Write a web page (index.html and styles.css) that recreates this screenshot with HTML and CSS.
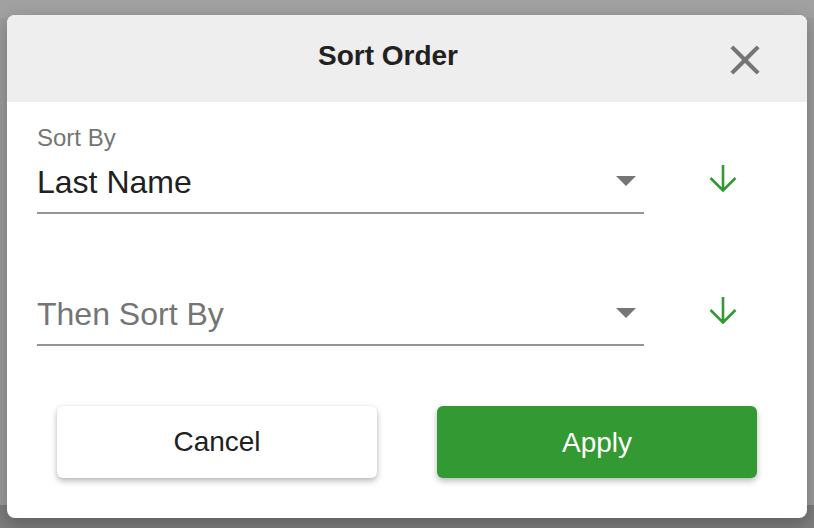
FILE: index.html
```html
<!DOCTYPE html>
<html>
<head>
<meta charset="utf-8">
<link rel="stylesheet" href="styles.css">
</head>
<body>
<div class="backdrop">
  <div class="dialog">
    <div class="dialog-header">
      <h1 class="dialog-title">Sort Order</h1>
      <button class="close-btn" aria-label="Close">
        <svg viewBox="0 0 24 24" width="50" height="50"><path fill="#757575" d="M19 6.41L17.59 5 12 10.59 6.41 5 5 6.41 10.59 12 5 17.59 6.41 19 12 13.41 17.59 19 19 17.59 13.41 12z"/></svg>
      </button>
    </div>
    <div class="dialog-body">
      <div class="sort-row">
        <div class="field">
          <div class="field-label">Sort By</div>
          <div class="field-value">
            <span class="value-text">Last Name</span>
            <span class="caret"></span>
          </div>
        </div>
        <div class="dir">
          <svg viewBox="0 0 28 28" width="28" height="28"><path d="M14 1V26.5M1.5 14L14 26.5L26.5 14" fill="none" stroke="#339933" stroke-width="2.6"/></svg>
        </div>
      </div>
      <div class="sort-row">
        <div class="field">
          <div class="field-label"></div>
          <div class="field-value">
            <span class="value-text placeholder">Then Sort By</span>
            <span class="caret"></span>
          </div>
        </div>
        <div class="dir">
          <svg viewBox="0 0 28 28" width="28" height="28"><path d="M14 1V26.5M1.5 14L14 26.5L26.5 14" fill="none" stroke="#339933" stroke-width="2.6"/></svg>
        </div>
      </div>
      <div class="actions">
        <button class="btn btn-cancel">Cancel</button>
        <button class="btn btn-apply">Apply</button>
      </div>
    </div>
  </div>
</div>
</body>
</html>
```

FILE: styles.css
```css
* { box-sizing: border-box; }
html, body { margin: 0; padding: 0; }
body {
  width: 814px;
  height: 528px;
  overflow: hidden;
  font-family: "Liberation Sans", Arial, sans-serif;
  background: linear-gradient(to bottom, #a1a1a1 0, #a1a1a1 18px, #9b9b9b 18px, #9b9b9b 505px, #7d7d7d 505px);
}
.backdrop {
  padding: 15px 7px 0 7px;
}
.dialog {
  width: 800px;
  height: 503px;
  background: #ffffff;
  border-radius: 8px;
  overflow: hidden;
  box-shadow: 0 6px 18px rgba(0,0,0,0.25);
}
.dialog-header {
  position: relative;
  height: 87px;
  background: #eeeeee;
  display: flex;
  align-items: center;
}
.dialog-title {
  flex: 1;
  margin: 0;
  padding: 0 38px 6px 0;
  text-align: center;
  font-size: 28px;
  font-weight: 700;
  color: #212121;
}
.close-btn {
  position: absolute;
  right: 37px;
  top: 20px;
  width: 50px;
  height: 50px;
  padding: 0;
  border: 0;
  background: transparent;
  display: block;
}
.close-btn svg { display: block; }
.dialog-body {
  padding: 20px 0 0 30px;
}
.sort-row {
  display: flex;
  align-items: flex-start;
  margin-bottom: 40px;
}
.field {
  width: 607px;
  border-bottom: 2px solid #949494;
}
.field-label {
  height: 28px;
  padding-top: 4px;
  line-height: 24px;
  font-size: 24px;
  color: #757575;
}
.field-value {
  margin-top: 12px;
  height: 50px;
  padding-bottom: 10px;
  display: flex;
  align-items: flex-start;
}
.value-text {
  flex: 1;
  font-size: 32px;
  line-height: 40px;
  color: #212121;
}
.value-text.placeholder { color: #757575; }
.caret {
  width: 0;
  height: 0;
  margin: 14px 8px 0 0;
  border-left: 10px solid transparent;
  border-right: 10px solid transparent;
  border-top: 10px solid #757575;
}
.dir {
  margin-left: 65px;
  padding-top: 42px;
  width: 28px;
}
.dir svg { display: block; }
.actions {
  display: flex;
  gap: 60px;
  padding: 20px 0 0 20px;
}
.btn {
  width: 320px;
  height: 72px;
  border: 0;
  border-radius: 6px;
  font-family: "Liberation Sans", Arial, sans-serif;
  font-size: 28px;
  cursor: pointer;
}
.btn-cancel {
  background: #ffffff;
  color: #212121;
  box-shadow: 0 3px 6px rgba(0,0,0,0.28), 0 0 2px rgba(0,0,0,0.08);
}
.btn-apply {
  background: #339933;
  color: #ffffff;
  padding-top: 3px;
  box-shadow: 0 3px 6px rgba(0,0,0,0.28);
}
```
